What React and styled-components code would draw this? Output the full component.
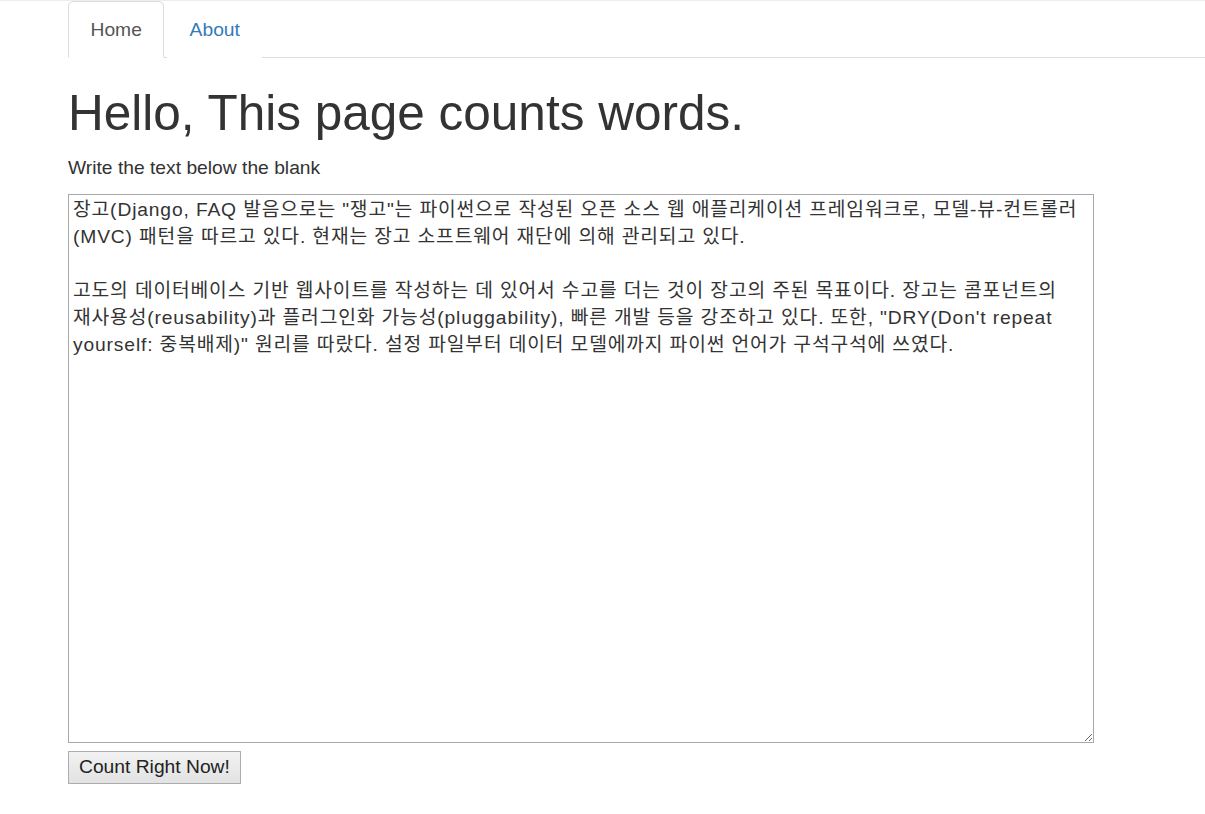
import React, { useState } from 'react'
import styled, { createGlobalStyle } from 'styled-components'

// bootstrap 3 look, everything scaled by 1.375
const GlobalStyle = createGlobalStyle`
  html, body {
    margin: 0;
    padding: 0;
    background: #fff;
  }
  body {
    font-family: "Liberation Sans", Arial, sans-serif;
    font-size: 19.25px;
    color: #333;
    border-top: 1px solid #eee;
  }
`

const Page = styled.div({
  paddingLeft: '68px',
})

const Tabs = styled.ul({
  display: 'flex',
  listStyle: 'none',
  margin: 0,
  padding: 0,
  borderBottom: '1px solid #ddd',
})

const Tab = styled.li({
  marginBottom: '-1px',
  marginRight: '2.75px',
})

const TabLink = styled.a(({ $active }) => ({
  display: 'block',
  padding: '13.75px 21.5px',
  lineHeight: '27.5px',
  fontSize: '19.25px',
  textDecoration: 'none',
  color: $active ? '#555' : '#337ab7',
  background: '#fff',
  border: '1px solid',
  borderColor: $active ? '#ddd #ddd transparent' : 'transparent',
  borderRadius: '5.5px 5.5px 0 0',
  cursor: $active ? 'default' : 'pointer',
}))

const Title = styled.h1({
  fontSize: '49.5px',
  fontWeight: 500,
  lineHeight: 1.1,
  margin: '27.5px 0 13.75px',
  color: '#333',
})

const Hint = styled.p({
  margin: '0 0 12.5px',
  fontSize: '19.25px',
  lineHeight: '27.5px',
})

const Form = styled.form({
  display: 'flex',
  flexDirection: 'column',
  alignItems: 'flex-start',
  gap: '8px',
})

// hangul in the shot is full width, so spread the letters a little
const TextBox = styled.textarea({
  boxSizing: 'border-box',
  width: '1026px',
  height: '549px',
  padding: '1px 4px',
  border: '1px solid #a9a9a9',
  fontFamily: '"Liberation Sans", Arial, "Noto Sans CJK KR", sans-serif',
  fontSize: '19.25px',
  letterSpacing: '0.85px',
  wordBreak: 'keep-all',
  lineHeight: '27px',
  color: '#333',
  resize: 'both',
  outline: 'none',
})

const Button = styled.button({
  height: '33px',
  padding: '0 10px',
  fontFamily: '"Liberation Sans", Arial, sans-serif',
  fontSize: '19.25px',
  color: '#222',
  background: 'linear-gradient(#f2f2f2, #e2e2e2)',
  border: '1px solid #adadad',
  borderRadius: 0,
  cursor: 'pointer',
})

const initialText = `장고(Django, FAQ 발음으로는 "쟁고"는 파이썬으로 작성된 오픈 소스 웹 애플리케이션 프레임워크로, 모델-뷰-컨트롤러(MVC) 패턴을 따르고 있다. 현재는 장고 소프트웨어 재단에 의해 관리되고 있다.

고도의 데이터베이스 기반 웹사이트를 작성하는 데 있어서 수고를 더는 것이 장고의 주된 목표이다. 장고는 콤포넌트의 재사용성(reusability)과 플러그인화 가능성(pluggability), 빠른 개발 등을 강조하고 있다. 또한, "DRY(Don't repeat yourself: 중복배제)" 원리를 따랐다. 설정 파일부터 데이터 모델에까지 파이썬 언어가 구석구석에 쓰였다.`

const App = () => {
  const [text, settext] = useState(initialText)

  return (
    <>
      <GlobalStyle />
      <Page>
        <Tabs>
          <Tab><TabLink $active>Home</TabLink></Tab>
          <Tab><TabLink>About</TabLink></Tab>
        </Tabs>
        <Title>Hello, This page counts words.</Title>
        <Hint>Write the text below the blank</Hint>
        <Form onSubmit={(e) => e.preventDefault()}>
          <TextBox value={text} onChange={(e) => settext(e.target.value)} spellCheck={false} />
          <Button type="submit">Count Right Now!</Button>
        </Form>
      </Page>
    </>
  )
}

export default App
